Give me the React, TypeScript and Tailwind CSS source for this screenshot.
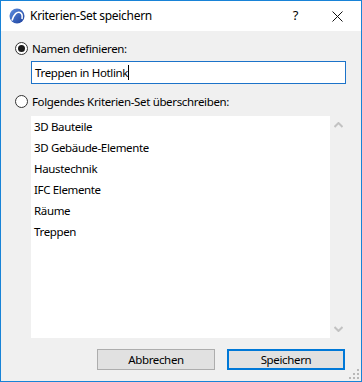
import { Fragment } from 'react'

const items = ['3D Bauteile', '3D Gebäude-Elemente', 'Haustechnik', 'IFC Elemente', 'Räume', 'Treppen']

function Radio({ checked }: { checked?: boolean }) {
  return (
    <span className="w-[13px] h-[13px] rounded-full border border-[#333] bg-white flex items-center justify-center shrink-0">
      {checked && <span className="w-[7px] h-[7px] rounded-full bg-[#1a1a1a]" />}
    </span>
  )
}

function Grip() {
  const dots = [
    [8, 0],
    [4, 4],
    [8, 4],
    [0, 8],
    [4, 8],
    [8, 8],
  ]
  return (
    <svg width="10" height="10" viewBox="0 0 10 10" className="absolute right-[2px] bottom-[2px]">
      {dots.map(([x, y], i) => (
        <rect key={i} x={x} y={y} width="2" height="2" fill="#b8b8b8" />
      ))}
    </svg>
  )
}

export default function App() {
  return (
    <div
      className="w-[362px] h-[382px] border border-[#1883d7] flex flex-col text-[11.5px] tracking-[-0.35px] text-black bg-[#f0f0f0] relative"
      style={{ fontFamily: '"Noto Sans", "Open Sans", sans-serif' }}
    >
      {/* Title bar */}
      <div className="h-[30px] bg-white flex items-center shrink-0">
        <svg width="16" height="16" viewBox="0 0 16 16" className="ml-[8px]">
          <defs>
            <linearGradient id="g" x1="0" y1="0" x2="1" y2="1">
              <stop offset="0" stopColor="#5f8fe0" />
              <stop offset="1" stopColor="#1b3f9c" />
            </linearGradient>
          </defs>
          <circle cx="8" cy="8" r="7.5" fill="url(#g)" />
          <path d="M3 12.5 C 5 6, 8 3.5, 11 4.5 C 13 5.3, 13.5 8, 13 11" stroke="#fff" strokeWidth="1.6" fill="none" />
        </svg>
        <span className="ml-[5px] text-[12px] tracking-[-0.3px]">Kriterien-Set speichern</span>
        <span className="ml-auto mr-[63px] text-[13px]">?</span>
        <svg width="11" height="11" viewBox="0 0 11 11" className="absolute right-[18px] top-[10px]">
          <path d="M0.5 0.5 L10.5 10.5 M10.5 0.5 L0.5 10.5" stroke="#111" strokeWidth="1" />
        </svg>
      </div>

      {/* Body */}
      <div className="flex-1 flex flex-col pl-[14px]">
        <label className="mt-[11px] h-[13px] flex items-center gap-[4px]">
          <Radio checked />
          <span>Namen definieren:</span>
        </label>

        <div className="mt-[6px] ml-[16px] w-[315px] h-[23px] border border-[#1c73c9] bg-white flex items-center pl-[3px]">
          <span>Treppen in Hotlink</span>
          <span className="w-px h-[15px] bg-black" />
        </div>

        <label className="mt-[11px] h-[13px] flex items-center gap-[4px]">
          <Radio />
          <span>Folgendes Kriterien-Set überschreiben:</span>
        </label>

        <div className="mt-[8px] ml-[16px] w-[315px] h-[222px] flex">
          <div className="w-[299px] bg-white flex flex-col">
            {items.map((t) => (
              <Fragment key={t}>
                <div className="h-[21px] flex items-center pl-[3px]">{t}</div>
              </Fragment>
            ))}
          </div>
          <div className="flex-1 flex flex-col items-center justify-between py-[6px]">
            <svg width="9" height="6" viewBox="0 0 9 6">
              <path d="M0.5 5 L4.5 1 L8.5 5" stroke="#c2c2c2" strokeWidth="2" fill="none" />
            </svg>
            <svg width="9" height="6" viewBox="0 0 9 6">
              <path d="M0.5 1 L4.5 5 L8.5 1" stroke="#c2c2c2" strokeWidth="2" fill="none" />
            </svg>
          </div>
        </div>

        <div className="mt-[11px] flex gap-[12px] ml-[82px]">
          <button className="w-[118px] h-[21px] bg-[#e1e1e1] border border-[#adadad] flex items-center justify-center">
            Abbrechen
          </button>
          <button className="w-[118px] h-[21px] bg-[#e1e1e1] border-2 border-[#0078d7] flex items-center justify-center">
            Speichern
          </button>
        </div>
      </div>
      <Grip />
    </div>
  )
}
